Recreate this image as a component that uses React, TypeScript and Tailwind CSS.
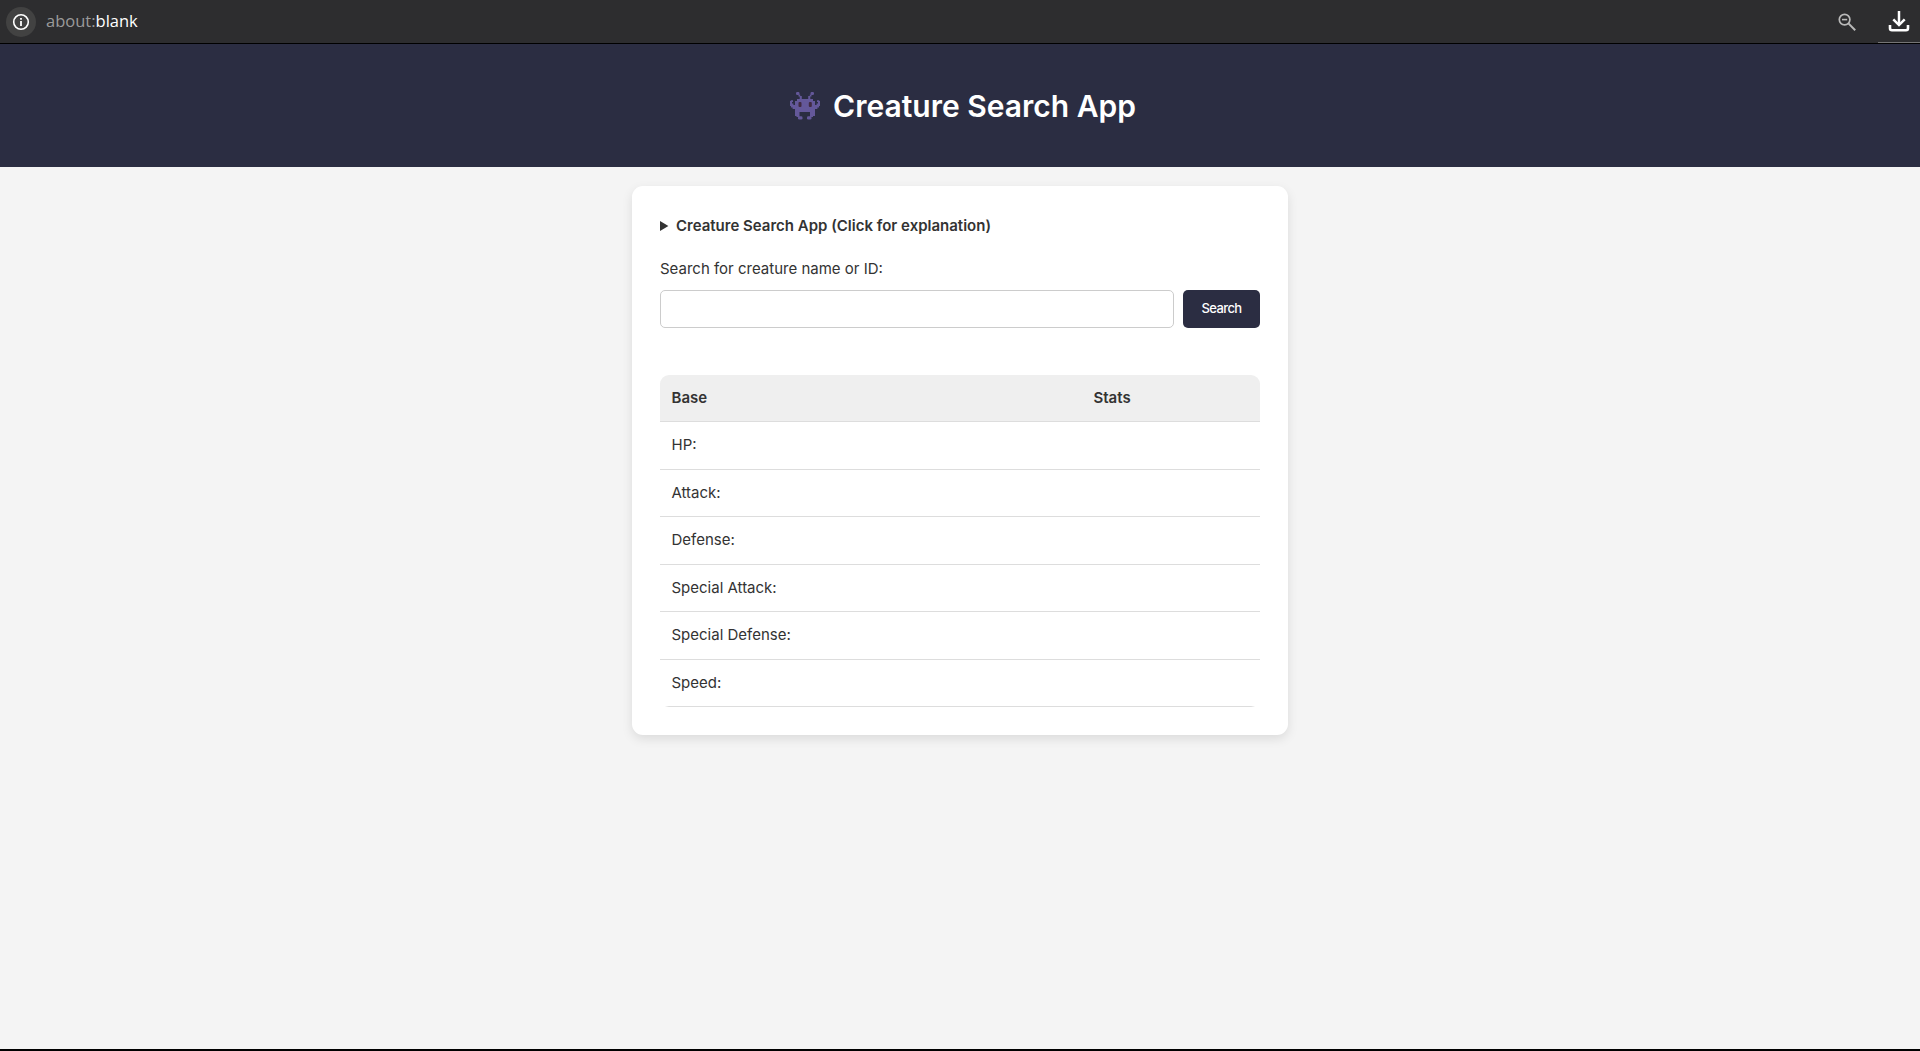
const STATS = [
  { label: "HP:", height: "h-12" },
  { label: "Attack:", height: "h-[47px]" },
  { label: "Defense:", height: "h-12" },
  { label: "Special Attack:", height: "h-[47px]" },
  { label: "Special Defense:", height: "h-12" },
  { label: "Speed:", height: "h-[47px]" },
];

function InfoIcon() {
  return (
    <svg width="18" height="18" viewBox="0 0 18 18" fill="none">
      <circle cx="9" cy="9" r="7.3" stroke="#fff" strokeWidth="1.6" />
      <path d="M9 8v5M9 5v1.8" stroke="#fff" strokeWidth="1.8" />
    </svg>
  );
}

function ZoomOutIcon() {
  return (
    <svg width="18" height="18" viewBox="0 0 18 18" fill="none" stroke="#b9b9b9">
      <circle cx="6.6" cy="6.6" r="5.3" strokeWidth="1.7" />
      <path d="M4 6.6h5.2" strokeWidth="1.6" />
      <path d="M10.4 10.4l6.8 6.8" strokeWidth="2" />
    </svg>
  );
}

function DownloadIcon() {
  return (
    <svg width="22" height="22" viewBox="0 0 22 22" fill="none" stroke="#fff">
      <path d="M11 1v14" strokeWidth="2.5" />
      <path d="M5.3 9.4l5.7 5.7 5.7-5.7" strokeWidth="2.5" />
      <path d="M2 15v3.2a2 2 0 0 0 2 2h14a2 2 0 0 0 2-2V15" strokeWidth="2.6" />
    </svg>
  );
}

function CreatureIcon() {
  return (
    <svg width="30" height="28" viewBox="0 0 30 28" fill="#64589a">
      <rect x="6" y="0" width="3.5" height="3" rx="1.2" />
      <rect x="20.5" y="0" width="3.5" height="3" rx="1.2" />
      <path d="M8.5 2.5h1.7V4h1.6v3H18.2V4h1.6V2.5h1.7v2h-1.2V7H23v2h2v4h1.6v-1.5H28V10h-1V8.2h2.2V9H30v5h-1v1.6h-1.6V17H25v7h-2v1h-3v-5H9.5v5h-3v-1H5v-7H2.6v-1.4H1V14H0V9h.8v-.8H3V10H2v1.5h1.4V13H5V9h2V7h2.7V4.5H8.5z" />
      <rect x="8.5" y="10" width="3" height="5" rx="1" fill="#412b41" />
      <rect x="18.8" y="10" width="3" height="5" rx="1" fill="#412b41" />
      <rect x="8" y="24.3" width="4.5" height="3.2" rx="1.3" />
      <rect x="17" y="24.3" width="4.5" height="3.2" rx="1.3" />
    </svg>
  );
}

export default function App() {
  return (
    <div className="flex h-[1051px] flex-col overflow-hidden border-b-2 border-black bg-[#f4f4f4] font-['Inter',sans-serif] text-[#333]">
      <div className="flex h-11 shrink-0 justify-between border-b border-black bg-[#2d2d2f]">
        <div className="flex items-center pl-1.5">
          <span className="flex size-[30px] items-center justify-center rounded-full bg-[#424242]">
            <InfoIcon />
          </span>
          <span className="ml-2.5 font-['Open_Sans',sans-serif] text-[16.5px] text-white">
            <span className="text-[#9a9a9a]">about:</span>blank
          </span>
        </div>
        <div className="flex">
          <div className="mr-[22px] pt-[13px]">
            <ZoomOutIcon />
          </div>
          <div className="w-[42px] border-b border-[#757575] pt-[10px] pl-[10px]">
            <DownloadIcon />
          </div>
        </div>
      </div>

      <header className="flex h-[123px] shrink-0 items-center justify-center bg-[#2b2d42]">
        <div className="flex items-center gap-[13px] pl-1.5">
          <div className="pt-px">
            <CreatureIcon />
          </div>
          <h1 className="pt-0.5 text-[30px] font-semibold text-white">Creature Search App</h1>
        </div>
      </header>

      <main className="mx-auto mt-[19px] h-[549px] w-[656px] rounded-[11px] bg-white px-7 pt-7 shadow-[0_4px_11px_rgba(0,0,0,0.1)]">
        <div className="flex h-6 items-center text-[15px] font-semibold">
          <svg width="9" height="10" viewBox="0 0 9 10" className="mr-[7px]" fill="#333">
            <path d="M0 0l8.4 5L0 10z" />
          </svg>
          Creature Search App (Click for explanation)
        </div>
        <label htmlFor="query" className="mt-[19px] block h-6 text-[15px] leading-6">
          Search for creature name or ID:
        </label>
        <div className="mt-[9px] flex h-[38px] gap-[9px]">
          <input id="query" className="w-[514px] rounded-[5px] border border-[#ccc] px-2 outline-none" />
          <button className="w-[77px] rounded-[5px] bg-[#2b2d42] text-[13px] font-medium tracking-[-0.6px] text-white">
            Search
          </button>
        </div>

        <div className="mt-[47px] overflow-hidden rounded-[9px] text-[15px]">
          <div className="flex h-[47px] items-center border-b border-[#ddd] bg-[#efefef] px-[11.5px] font-semibold">
            <span className="w-[422px]">Base</span>
            <span>Stats</span>
          </div>
          {STATS.map((row) => (
            <div key={row.label} className={`flex items-center border-b border-[#ddd] px-[11.5px] ${row.height}`}>
              {row.label}
            </div>
          ))}
        </div>
      </main>
    </div>
  );
}
